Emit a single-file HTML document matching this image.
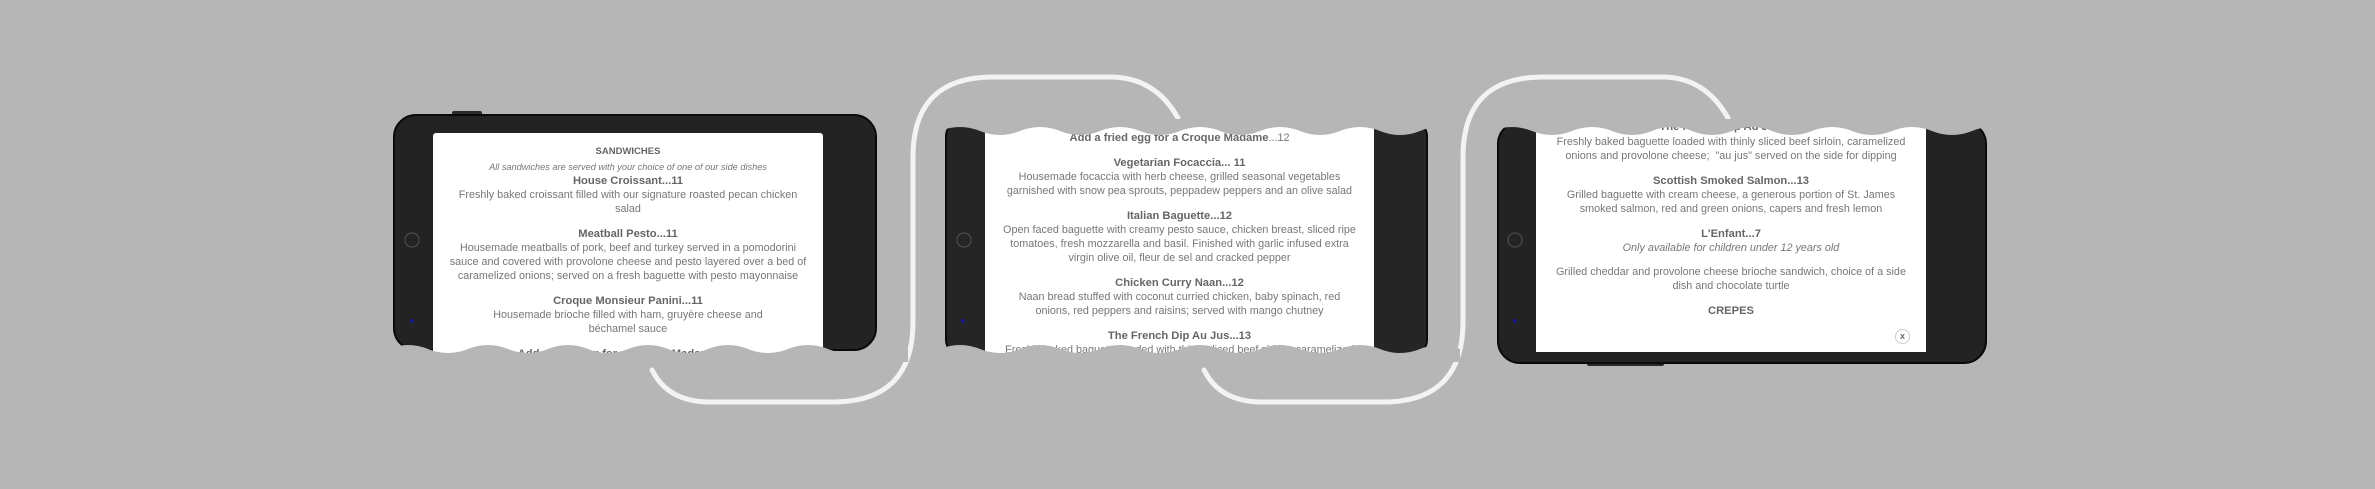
<!DOCTYPE html>
<html><head><meta charset="utf-8">
<style>
html,body{margin:0;padding:0;width:2375px;height:489px;overflow:hidden;background:#b6b6b6;}
svg{position:absolute;left:0;top:0;}
.scr{position:absolute;background:#fff;overflow:hidden;font-family:"Liberation Sans",Arial,sans-serif;color:#777;}
.l{position:absolute;left:-20px;right:-20px;text-align:center;height:14px;line-height:14px;font-size:10.8px;white-space:nowrap;}
.h{font-weight:bold;font-size:11.2px;color:#666;}
.s{font-weight:bold;font-size:9.5px;color:#666;}
.i{font-style:italic;font-size:9.2px;}
.ii{font-style:italic;font-size:10.8px;}
</style></head><body>
<svg width="2375" height="489">
<g fill="none" stroke="#f2f3f5" stroke-width="5" stroke-linecap="round">
<path d="M652,370 Q668,402 710,402 L833,402 Q913,402 913,322 L913,157 Q913,77 993,77 L1110,77 Q1155,77 1178,118"/>
<path d="M1204,370 Q1220,402 1262,402 L1383,402 Q1463,402 1463,322 L1463,157 Q1463,77 1543,77 L1662,77 Q1705,77 1728,118"/>
</g>
<rect x="452" y="111" width="30" height="6" rx="2" fill="#2a2a2a"/>
<rect x="394" y="115" width="482" height="235" rx="22" fill="#232323" stroke="#0a0a0a" stroke-width="2"/>
<rect x="946" y="122" width="481" height="232" rx="14" fill="#252525" stroke="#0a0a0a" stroke-width="2"/>
<rect x="1587" y="360" width="77" height="6" rx="2" fill="#2a2a2a"/>
<rect x="1498" y="122" width="488" height="241" rx="22" fill="#232323" stroke="#0a0a0a" stroke-width="2"/>
<g fill="none" stroke="#4a4a4a" stroke-width="1.3">
<circle cx="412" cy="240" r="7"/><circle cx="964" cy="240" r="7"/><circle cx="1515" cy="240" r="7"/>
</g>
<g fill="#1a1a8a"><circle cx="412" cy="321" r="2"/><circle cx="963" cy="321" r="2"/><circle cx="1515" cy="321" r="2"/></g>
</svg>

<div class="scr" style="left:433px;top:133px;width:390px;height:225px;border-radius:3px 3px 0 0;">
<div class="l s" style="top:12px">SANDWICHES</div>
<div class="l i" style="top:27px">All sandwiches are served with your choice of one of our side dishes</div>
<div class="l h" style="top:41px">House Croissant...11</div>
<div class="l" style="top:55px">Freshly baked croissant filled with our signature roasted pecan chicken</div>
<div class="l" style="top:69px">salad</div>
<div class="l h" style="top:94px">Meatball Pesto...11</div>
<div class="l" style="top:108px">Housemade meatballs of pork, beef and turkey served in a pomodorini</div>
<div class="l" style="top:122px">sauce and covered with provolone cheese and pesto layered over a bed of</div>
<div class="l" style="top:136px">caramelized onions; served on a fresh baguette with pesto mayonnaise</div>
<div class="l h" style="top:161px">Croque Monsieur Panini...11</div>
<div class="l" style="top:175px">Housemade brioche filled with ham, gruyère cheese and</div>
<div class="l" style="top:189px">béchamel sauce</div>
<div class="l h" style="top:214px">Add a fried egg for a Croque Madame...12</div>
</div>

<div class="scr" style="left:985px;top:120px;width:389px;height:236px;">
<div class="l" style="top:11px"><b style="color:#666;font-size:11.2px">Add a fried egg for a Croque Madame</b>...12</div>
<div class="l h" style="top:36px">Vegetarian Focaccia... 11</div>
<div class="l" style="top:50px">Housemade focaccia with herb cheese, grilled seasonal vegetables</div>
<div class="l" style="top:64px">garnished with snow pea sprouts, peppadew peppers and an olive salad</div>
<div class="l h" style="top:89px">Italian Baguette...12</div>
<div class="l" style="top:103px">Open faced baguette with creamy pesto sauce, chicken breast, sliced ripe</div>
<div class="l" style="top:117px">tomatoes, fresh mozzarella and basil. Finished with garlic infused extra</div>
<div class="l" style="top:131px">virgin olive oil, fleur de sel and cracked pepper</div>
<div class="l h" style="top:156px">Chicken Curry Naan...12</div>
<div class="l" style="top:170px">Naan bread stuffed with coconut curried chicken, baby spinach, red</div>
<div class="l" style="top:184px">onions, red peppers and raisins; served with mango chutney</div>
<div class="l h" style="top:209px">The French Dip Au Jus...13</div>
<div class="l" style="top:223px">Freshly baked baguette loaded with thinly sliced beef sirloin, caramelized</div>
</div>

<div class="scr" style="left:1536px;top:120px;width:390px;height:232px;">
<div class="l h" style="top:0px">The French Dip Au Jus...13</div>
<div class="l" style="top:15px">Freshly baked baguette loaded with thinly sliced beef sirloin, caramelized</div>
<div class="l" style="top:29px">onions and provolone cheese;&nbsp; "au jus" served on the side for dipping</div>
<div class="l h" style="top:54px">Scottish Smoked Salmon...13</div>
<div class="l" style="top:68px">Grilled baguette with cream cheese, a generous portion of St. James</div>
<div class="l" style="top:82px">smoked salmon, red and green onions, capers and fresh lemon</div>
<div class="l h" style="top:107px">L'Enfant...7</div>
<div class="l ii" style="top:121px">Only available for children under 12 years old</div>
<div class="l" style="top:145px">Grilled cheddar and provolone cheese brioche sandwich, choice of a side</div>
<div class="l" style="top:159px">dish and chocolate turtle</div>
<div class="l h" style="top:184px">CREPES</div>
<div style="position:absolute;left:359px;top:209px;width:13px;height:13px;border:1.5px solid #ccc;border-radius:50%;font:bold 9px/13px 'Liberation Sans',sans-serif;color:#666;text-align:center;">x</div>
</div>

<svg width="2375" height="489">
<g fill="#b6b6b6">
<path d="M388,349 Q408,341 428,349 T468,349 T508,349 T548,349 T588,349 T628,349 T668,349 T708,349 T748,349 T788,349 T828,349 T868,349 T908,349 L908,362 L388,362 Z"/>
<path d="M940,349 Q960,341 980,349 T1020,349 T1060,349 T1100,349 T1140,349 T1180,349 T1220,349 T1260,349 T1300,349 T1340,349 T1380,349 T1420,349 T1460,349 L1460,362 L940,362 Z"/>
<path d="M940,131 Q960,123 980,131 T1020,131 T1060,131 T1100,131 T1140,131 T1180,131 T1220,131 T1260,131 T1300,131 T1340,131 T1380,131 T1420,131 T1440,131 L1440,119 L940,119 Z"/>
<path d="M1492,131 Q1512,123 1532,131 T1572,131 T1612,131 T1652,131 T1692,131 T1732,131 T1772,131 T1812,131 T1852,131 T1892,131 T1932,131 T1972,131 T2012,131 L2012,119 L1492,119 Z"/>
</g>
</svg>
</body></html>
